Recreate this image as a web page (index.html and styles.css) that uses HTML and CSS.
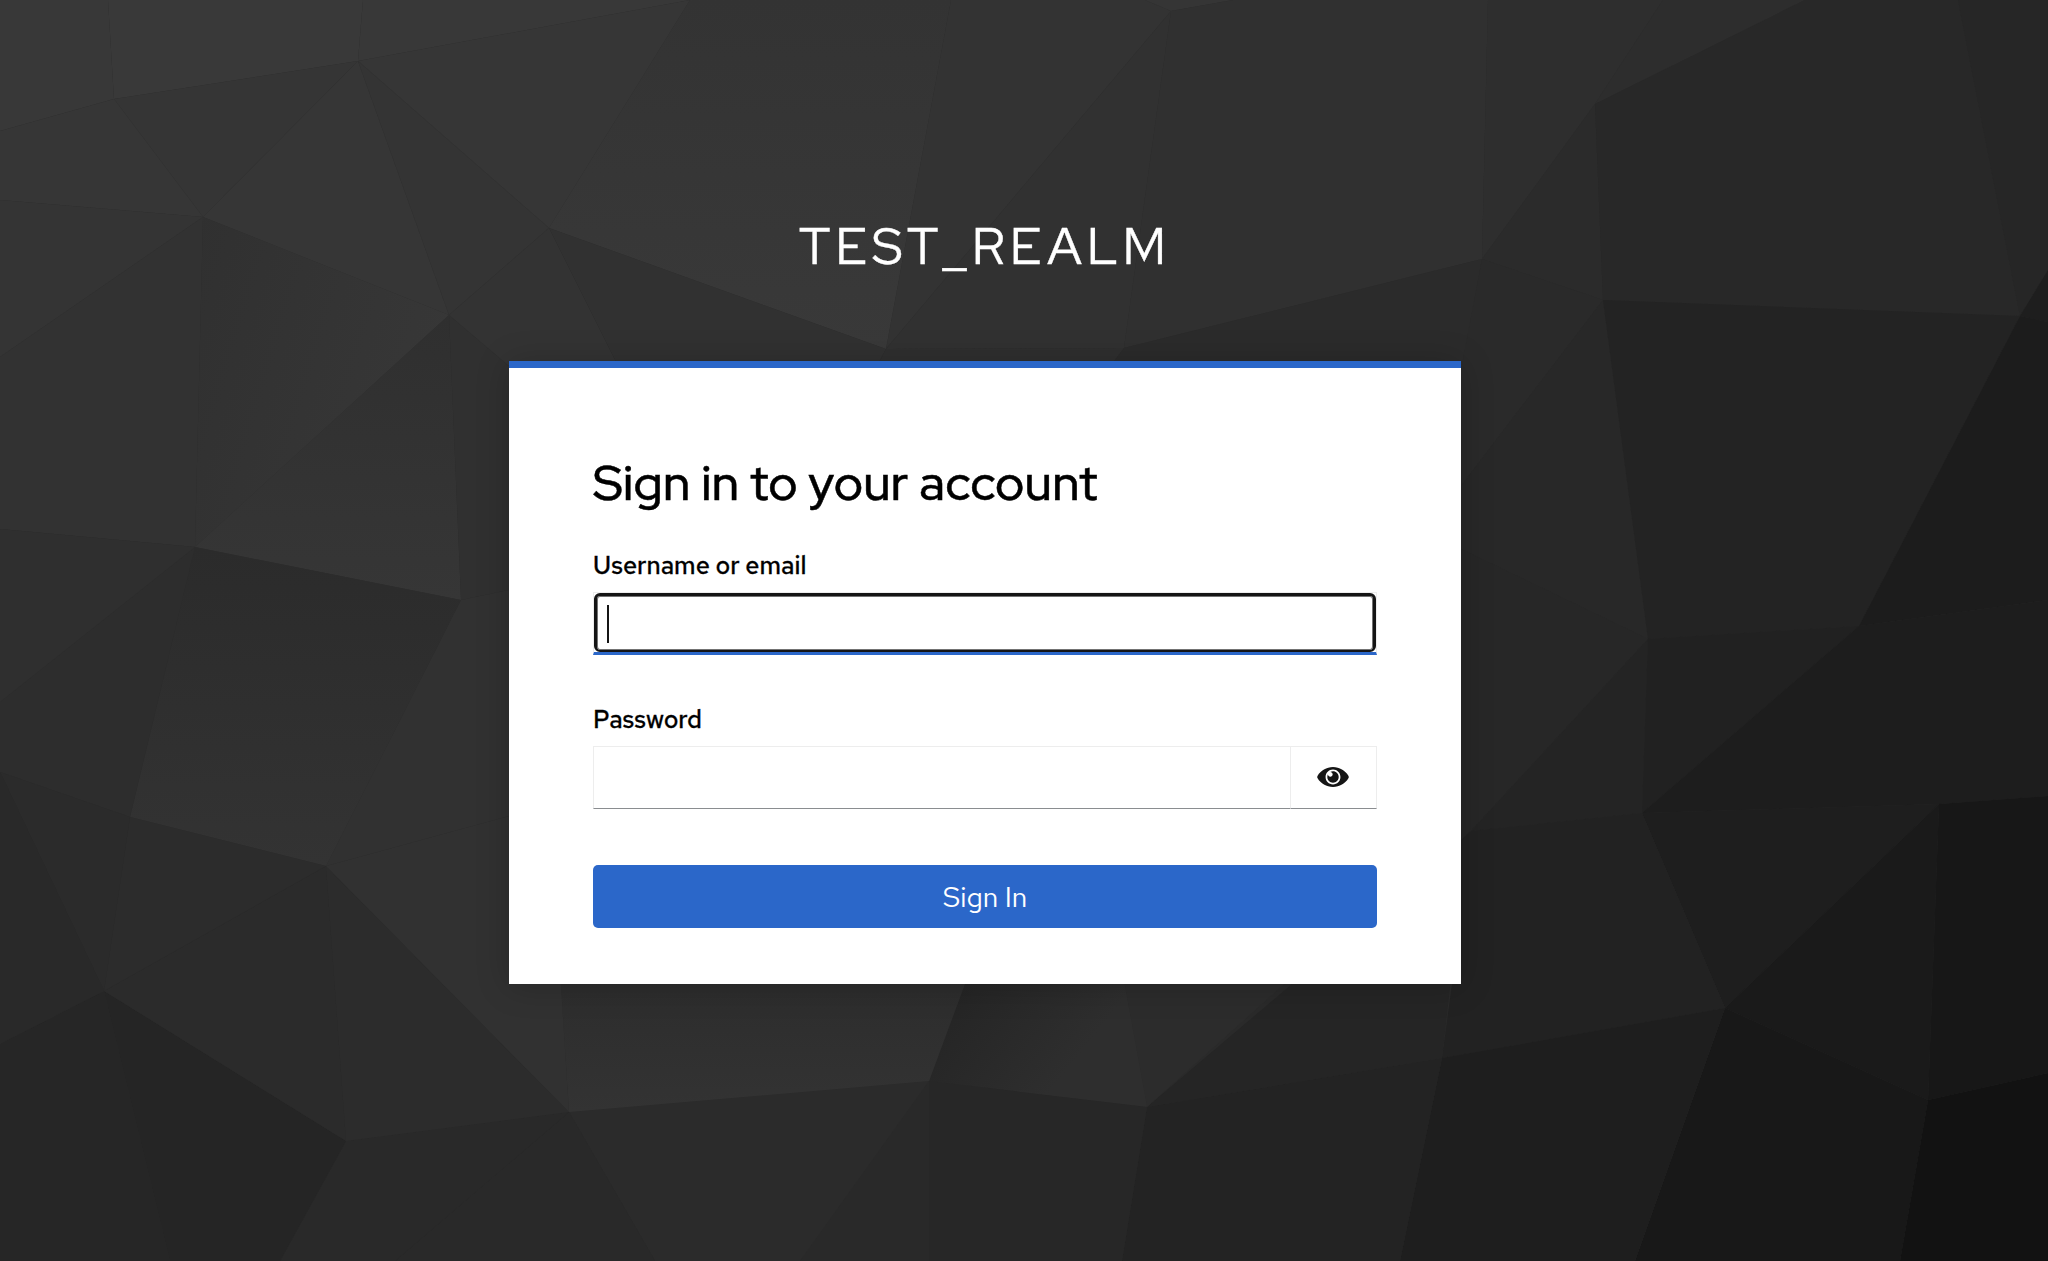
FILE: index.html
```html
<!DOCTYPE html>
<html lang="en">
<head>
    <meta charset="UTF-8">
    <meta name="viewport" content="width=device-width, initial-scale=1.0">
    <title>Sign in to TEST_REALM</title>
    <link rel="stylesheet" href="styles.css">
</head>
<body>
    <svg class="login-bg" viewBox="0 0 2048 1261" preserveAspectRatio="xMidYMid slice" aria-hidden="true">
        <defs>
            <linearGradient id="fadeLeft" x1="0" y1="0" x2="1" y2="0.4">
                <stop offset="0" stop-color="#303030"/>
                <stop offset="1" stop-color="#373737"/>
            </linearGradient>
            <linearGradient id="fadeDown" x1="0" y1="0" x2="0" y2="1">
                <stop offset="0" stop-color="#2f2f2f"/>
                <stop offset="1" stop-color="#363636"/>
            </linearGradient>
            <linearGradient id="fadeTop" x1="0" y1="0" x2="0" y2="1">
                <stop offset="0" stop-color="#333333"/>
                <stop offset="1" stop-color="#393939"/>
            </linearGradient>
            <linearGradient id="fadeLow" x1="0" y1="0" x2="0" y2="1">
                <stop offset="0" stop-color="#2c2c2c"/>
                <stop offset="1" stop-color="#333333"/>
            </linearGradient>
            <linearGradient id="fadeDark" x1="0" y1="0" x2="1" y2="0.5">
                <stop offset="0.1" stop-color="#242424"/>
                <stop offset="0.8" stop-color="#2e2e2e"/>
            </linearGradient>
            <linearGradient id="fadeValley" x1="0" y1="0" x2="0" y2="1">
                <stop offset="0" stop-color="#2b2b2b"/>
                <stop offset="1" stop-color="#333333"/>
            </linearGradient>
        </defs>
        <!-- top left -->
        <polygon points="0,0 108,0 114,99 0,131" fill="#383838"/>
        <polygon points="108,0 363,0 358,61 114,99" fill="#393939"/>
        <polygon points="363,0 690,0 358,61" fill="#383838"/>
        <polygon points="358,61 690,0 549,228" fill="#363636"/>
        <polygon points="114,99 358,61 203,217" fill="#353535"/>
        <polygon points="0,131 114,99 203,217 0,200" fill="#363636"/>
        <polygon points="358,61 203,217 449,315" fill="#363636"/>
        <polygon points="358,61 549,228 449,315" fill="#343434"/>
        <polygon points="0,200 203,217 0,357" fill="#343434"/>
        <polygon points="203,217 449,315 195,547" fill="url(#fadeLeft)"/>
        <polygon points="0,357 203,217 195,547 0,529" fill="#323232"/>
        <polygon points="449,315 195,547 461,600" fill="url(#fadeDown)"/>
        <polygon points="449,315 509,366 509,590 461,600" fill="#303030"/>
        <!-- top middle -->
        <polygon points="690,0 951,0 886,349 549,228" fill="url(#fadeTop)"/>
        <polygon points="951,0 1145,0 1171,11 886,349" fill="#333333"/>
        <polygon points="1145,0 1233,0 1171,11" fill="#353535"/>
        <polygon points="1171,11 886,349 1124,348" fill="#313131"/>
        <polygon points="1233,0 1488,0 1482,259 1124,348 1171,11" fill="#303030"/>
        <polygon points="549,228 886,349 870,380 625,380" fill="#313131"/>
        <polygon points="549,228 625,380 509,380 509,366 449,315" fill="#333333"/>
        <polygon points="886,349 1124,348 1100,380 870,380" fill="#2f2f2f"/>
        <polygon points="1124,348 1482,259 1461,380 1100,380" fill="#2b2b2b"/>
        <!-- top right -->
        <polygon points="1488,0 1663,0 1595,104 1482,259" fill="#2e2e2e"/>
        <polygon points="1663,0 1805,0 1595,104" fill="#2d2d2d"/>
        <polygon points="1595,104 1482,259 1603,300" fill="#2b2b2b"/>
        <polygon points="1595,104 1805,0 1958,0 2020,316 1603,300" fill="#282828"/>
        <polygon points="1958,0 2048,0 2048,270 2020,316" fill="#262626"/>
        <polygon points="2020,316 2048,270 2048,322" fill="#1e1e1e"/>
        <polygon points="1482,259 1603,300 1461,486 1461,370" fill="#2a2a2a"/>
        <polygon points="1603,300 1461,486 1461,549 1648,639" fill="#282828"/>
        <polygon points="1603,300 2020,316 1859,626 1648,639" fill="#232323"/>
        <polygon points="2020,316 2048,322 2048,600 1859,626" fill="#1c1c1c"/>
        <!-- bottom right -->
        <polygon points="1461,549 1648,639 1471,831 1461,840" fill="#272727"/>
        <polygon points="1648,639 1471,831 1642,813" fill="#242424"/>
        <polygon points="1648,639 1859,626 1642,813" fill="#212121"/>
        <polygon points="1859,626 2048,600 2048,796 1939,804 1642,813" fill="#1d1d1d"/>
        <polygon points="1642,813 1939,804 1725,1008" fill="#1e1e1e"/>
        <polygon points="1471,831 1642,813 1725,1008 1442,1058 1452,984 1461,984 1461,840" fill="#222222"/>
        <polygon points="1939,804 1725,1008 1928,1100" fill="#1a1a1a"/>
        <polygon points="1939,804 2048,796 2048,1073 1928,1100" fill="#171717"/>
        <polygon points="1725,1008 1928,1100 1900,1261 1635,1261" fill="#181818"/>
        <polygon points="1928,1100 2048,1073 2048,1261 1900,1261" fill="#121212"/>
        <polygon points="1442,1058 1725,1008 1635,1261 1400,1261" fill="#1e1e1e"/>
        <!-- bottom middle -->
        <polygon points="1147,1107 1442,1058 1400,1261 1122,1261" fill="#232323"/>
        <polygon points="1147,1107 1292,984 1300,970 1452,970 1442,1058" fill="#252525"/>
        <polygon points="1147,1107 1300,970 1122,970" fill="#2c2c2c"/>
        <polygon points="1147,1107 1122,970 970,970 929,1081" fill="url(#fadeDark)"/>
        <polygon points="929,1081 1147,1107 1122,1261 929,1261" fill="#272727"/>
        <polygon points="929,1081 929,1261 800,1261" fill="#292929"/>
        <polygon points="929,1081 569,1112 655,1261 800,1261" fill="#2b2b2b"/>
        <polygon points="569,1112 929,1081 970,970 560,970" fill="url(#fadeLow)"/>
        <!-- bottom left -->
        <polygon points="569,1112 655,1261 395,1261" fill="#292929"/>
        <polygon points="569,1112 346,1141 280,1261 395,1261" fill="#292929"/>
        <polygon points="346,1141 104,991 170,1261 280,1261" fill="#252525"/>
        <polygon points="104,991 0,1044 0,1261 170,1261" fill="#262626"/>
        <polygon points="104,991 346,1141 326,866" fill="#2b2b2b"/>
        <polygon points="326,866 346,1141 569,1112" fill="#2c2c2c"/>
        <polygon points="326,866 569,1112 560,970 509,970 509,816" fill="#313131"/>
        <polygon points="461,600 509,590 509,816 326,866" fill="#313131"/>
        <polygon points="195,547 461,600 326,866 130,817" fill="url(#fadeValley)"/>
        <polygon points="195,547 130,817 0,772 0,702" fill="#2d2d2d"/>
        <polygon points="195,547 0,529 0,702" fill="#2f2f2f"/>
        <polygon points="130,817 326,866 104,991" fill="#2c2c2c"/>
        <polygon points="0,772 130,817 104,991" fill="#2b2b2b"/>
        <polygon points="0,772 104,991 0,1044" fill="#292929"/>
    </svg>

    <div class="login-container">
        <header class="login-header">TEST_REALM</header>
        <main class="login-card">
            <h1 class="login-title">Sign in to your account</h1>
            <form action="" onsubmit="event.preventDefault()">
                <label for="username" class="form-label">Username or email</label>
                <div class="input-wrap">
                    <input type="text" id="username" name="username" class="form-field form-field-focus">
                    <span class="caret"></span>
                </div>
                <label for="password" class="form-label">Password</label>
                <div class="input-group">
                    <input type="password" id="password" name="password" class="form-field">
                    <button type="button" class="toggle-btn" aria-label="Show password">
                        <svg class="eye-icon" viewBox="0 0 576 512" fill="currentColor">
                            <path d="M569.354 231.631C512.969 135.949 407.81 72 288 72 168.14 72 63.004 135.994 6.646 231.631a47.999 47.999 0 0 0 0 48.739C63.031 376.051 168.19 440 288 440c119.86 0 224.996-63.994 281.354-159.631a47.997 47.997 0 0 0 0-48.738zM288 392c-75.162 0-136-60.827-136-136 0-75.162 60.826-136 136-136 75.162 0 136 60.826 136 136 0 75.162-60.826 136-136 136zm104-136c0 57.438-46.562 104-104 104s-104-46.562-104-104c0-17.708 4.431-34.379 12.236-48.973l-.001.032c0 23.651 19.173 42.823 42.824 42.823s42.824-19.173 42.824-42.823c0-23.651-19.173-42.824-42.824-42.824l-.032.001C253.621 156.431 270.292 152 288 152c57.438 0 104 46.562 104 104z"/>
                        </svg>
                    </button>
                </div>
                <input type="submit" value="Sign In" class="submit-btn">
            </form>
        </main>
    </div>
</body>
</html>
```
FILE: styles.css
```css
* {
    box-sizing: border-box;
}
body {
    margin: 0;
    height: 1261px;
    overflow: hidden;
    background-color: #2a2a2a;
    font-family: "Red Hat Text", Inter, sans-serif;
    color: #000;
}
.login-bg {
    position: absolute;
    top: 0;
    left: 0;
    width: 100%;
    height: 100%;
    z-index: -1;
}
.login-container {
    width: 952px;
    margin-left: 509px;
    padding-top: 216px;
}
.login-header {
    height: 145px;
    line-height: 60px;
    font-family: "Red Hat Display", Inter, sans-serif;
    font-size: 50.75px;
    letter-spacing: 5.25px;
    text-align: center;
    color: #fff;
    -webkit-text-stroke: 0.4px #fff;
}
.login-card {
    height: 623px;
    padding: 84px 84px 0;
    border-top: 7px solid #2b67c9;
    background-color: #fff;
    box-shadow: 0 2px 32px rgba(0,0,0,0.2);
}
.login-title {
    height: 92px;
    margin: 0;
    font-family: "Red Hat Display", Inter, sans-serif;
    font-size: 49px;
    font-weight: 500;
    line-height: 62px;
    letter-spacing: 0.3px;
    white-space: nowrap;
    -webkit-text-stroke: 0.5px #000;
}
.form-label {
    display: block;
    height: 48px;
    font-size: 25px;
    font-weight: 500;
    line-height: 44px;
    -webkit-text-stroke: 0.3px #000;
}
.input-wrap {
    position: relative;
    height: 63px;
    margin-bottom: 43px;
}
.form-field {
    display: block;
    width: 100%;
    height: 63px;
    padding: 0 14px;
    border: 1px solid #ededed;
    border-bottom-color: #8a8d90;
    border-radius: 0;
    outline: none;
    background-color: #fff;
    font-size: 25px;
}
.form-field-focus {
    border-bottom: 3px solid #2b67c9;
}
/* focus ring, sits inside the field borders */
.input-wrap::after {
    content: "";
    position: absolute;
    top: 1px;
    left: 1px;
    right: 1px;
    bottom: 3px;
    border: 3px solid #151515;
    border-bottom-width: 2px;
    border-radius: 6px;
    box-shadow: inset 0 0 0 1px rgba(21,21,21,0.6);
}
.caret {
    position: absolute;
    top: 13px;
    left: 14px;
    width: 2px;
    height: 38px;
    background-color: #151515;
}
.input-group {
    display: flex;
    margin-bottom: 56px;
}
.input-group .form-field {
    flex: 1;
    min-width: 0;
}
.toggle-btn {
    display: flex;
    align-items: center;
    justify-content: center;
    width: 87px;
    height: 63px;
    margin-left: -1px;
    padding: 0 1px 1px 0;
    border: 1px solid #ededed;
    border-bottom-color: #8a8d90;
    background-color: #fff;
    color: #151515;
    cursor: pointer;
}
.eye-icon {
    width: 32px;
    height: 28px;
}
.submit-btn {
    display: block;
    width: 100%;
    height: 63px;
    padding: 2px 0 0;
    border: none;
    border-radius: 5px;
    background-color: #2b67c9;
    color: #fff;
    font-family: inherit;
    font-size: 28px;
    line-height: 61px;
    cursor: pointer;
}
.submit-btn:hover {
    background-color: #1f56b0;
}
```
